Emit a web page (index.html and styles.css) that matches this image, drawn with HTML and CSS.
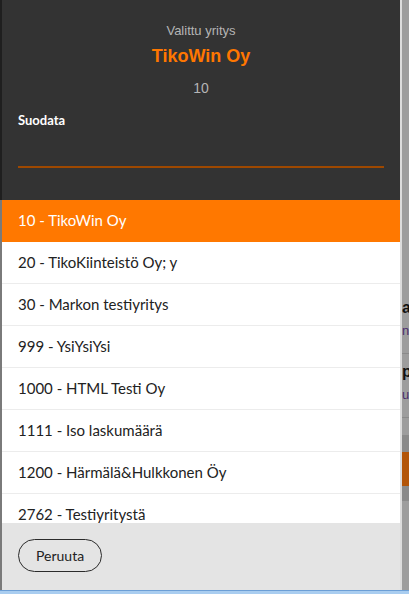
FILE: index.html
```html
<!DOCTYPE html>
<html lang="fi">
<head>
  <meta charset="UTF-8">
  <title>Valitse yritys</title>
  <link rel="stylesheet" href="styles.css">
</head>
<body>

  <div class="screen">
    <div class="edge-left"></div>

    <div class="dialog">
      <div class="dialog-head">
        <div class="head-label">Valittu yritys</div>
        <div class="head-name">TikoWin Oy</div>
        <div class="head-id">10</div>

        <label for="filter" class="filter-label">Suodata</label>
        <input type="text" id="filter" class="filter-input">
      </div>

      <ul class="company-list">
        <li class="selected">10 - TikoWin Oy</li>
        <li>20 - TikoKiinteistö Oy; y</li>
        <li>30 - Markon testiyritys</li>
        <li>999 - YsiYsiYsi</li>
        <li>1000 - HTML Testi Oy</li>
        <li>1111 - Iso laskumäärä</li>
        <li>1200 - Härmälä&amp;Hulkkonen Öy</li>
        <li>2762 - Testiyritystä</li>
        <li>3000 - Demo Oy</li>
      </ul>

      <div class="dialog-foot">
        <button type="button" class="cancel-btn">Peruuta</button>
      </div>
    </div>

    <div class="backdrop">
      <div class="bd-top"></div>
      <div class="bd-title">a</div>
      <div class="bd-sub">n</div>
      <div class="bd-line"></div>
      <div class="bd-title">p</div>
      <div class="bd-sub">u</div>
      <div class="bd-line"></div>
      <div class="bd-dark"></div>
      <div class="bd-orange"></div>
      <div class="bd-dark small"></div>
    </div>
  </div>

  <div class="taskbar"></div>

</body>
</html>
```

FILE: styles.css
```css
body {
  margin: 0;
  padding: 0;
  width: 409px;
  height: 594px;
  overflow: hidden;
  background-color: #9c9c9c;
  font-family: Lato, "Open Sans", sans-serif;
}

.screen {
  display: flex;
  height: 590px;
}

.edge-left {
  width: 2px;
  flex-shrink: 0;
  background: linear-gradient(#1f1f1f 0, #1f1f1f 200px, #7a7a7a 200px);
}

.dialog {
  width: 398px;
  flex-shrink: 0;
  display: flex;
  flex-direction: column;
  background-color: white;
}

.dialog-head {
  height: 200px;
  box-sizing: border-box;
  background-color: #333333;
  padding: 23px 16px 0 16px;
  display: flex;
  flex-direction: column;
}

.head-label {
  font-family: "Liberation Sans", Arial, sans-serif;
  font-size: 13px;
  color: #b5b5b5;
  text-align: center;
  line-height: 16px;
}

.head-name {
  font-family: "Liberation Sans", Arial, sans-serif;
  font-size: 18px;
  font-weight: bold;
  color: #ff7700;
  text-align: center;
  line-height: 22px;
  margin-top: 6px;
}

.head-id {
  font-family: "Liberation Sans", Arial, sans-serif;
  font-size: 14px;
  color: #b5b5b5;
  text-align: center;
  line-height: 16px;
  margin-top: 13px;
}

.filter-label {
  display: block;
  font-size: 13px;
  font-weight: bold;
  color: white;
  line-height: 16px;
  margin-top: 16px;
}

.filter-input {
  display: block;
  width: 100%;
  height: 32px;
  box-sizing: border-box;
  margin-top: 8px;
  padding: 0;
  background: transparent;
  border: none;
  border-bottom: 2px solid #9e4800;
  color: white;
  font-family: inherit;
  font-size: 14px;
  outline: none;
}

.company-list {
  list-style: none;
  margin: 0;
  padding: 0;
  flex: 1;
  overflow: hidden;
}

.company-list li {
  height: 41px;
  line-height: 41px;
  padding: 0 16px;
  font-size: 15px;
  color: #222;
  border-bottom: 1px solid #ececec;
  white-space: nowrap;
}

.company-list li.selected {
  background-color: #ff7800;
  color: white;
  border-bottom-color: #ff7800;
}

.dialog-foot {
  height: 67px;
  flex-shrink: 0;
  box-sizing: border-box;
  background-color: #e4e4e4;
  padding: 16px 16px 0 16px;
}

.cancel-btn {
  display: block;
  height: 33px;
  line-height: 31px;
  padding: 0 17px;
  border: 1px solid #2b2b2b;
  border-radius: 17px;
  background: transparent;
  font-family: Lato, sans-serif;
  font-size: 14px;
  color: #222;
  cursor: pointer;
}

.backdrop {
  flex: 1;
  overflow: hidden;
  border-left: 2px solid #dcdcdc;
  background-color: #9d9d9d;
  display: flex;
  flex-direction: column;
  white-space: nowrap;
}

.bd-top {
  height: 298px;
}

.bd-title {
  font-family: "Liberation Sans", Arial, sans-serif;
  font-weight: bold;
  font-size: 16px;
  line-height: 20px;
  color: #111;
}

.bd-sub {
  font-family: "Liberation Sans", Arial, sans-serif;
  font-size: 13px;
  line-height: 26px;
  color: #4a2d6e;
}

.bd-line {
  height: 1px;
  background-color: #8a8a8a;
  margin: 9px 0 8px 0;
}

.bd-dark {
  height: 17px;
  margin-top: 9px;
  background-color: #8a8a8a;
}

.bd-dark.small {
  margin-top: 0;
  height: 15px;
}

.bd-orange {
  height: 34px;
  background-color: #b35508;
}

.taskbar {
  height: 4px;
  background-color: #a9cdf0;
  border-top: 1px solid #6c9fd6;
  box-sizing: border-box;
}
```
